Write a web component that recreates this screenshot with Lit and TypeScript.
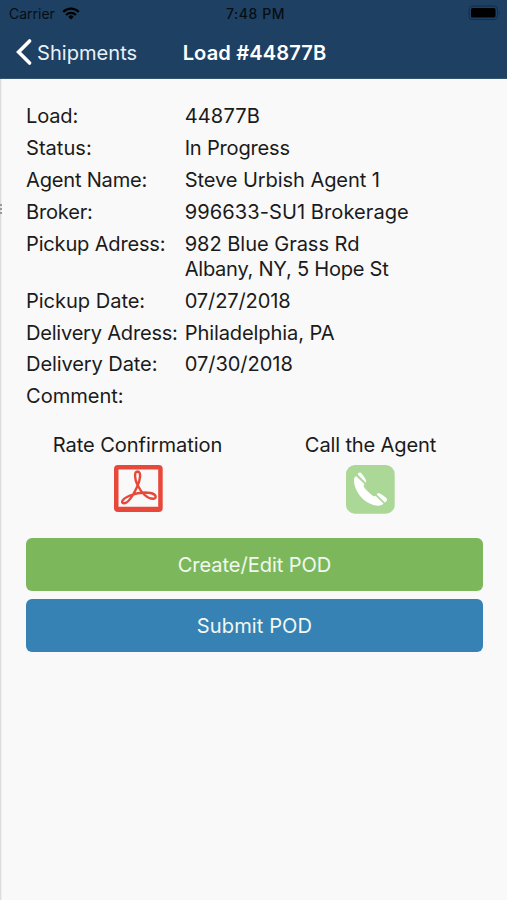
import { LitElement, html, css } from "lit";
import { customElement } from "lit/decorators.js";
import { styleMap } from "lit/directives/style-map.js";

/** A piece of text with its own letter spacing in pixels. */
interface Tracked {
  text: string;
  tracking: number;
}

interface Row {
  label: Tracked;
  lines: Tracked[];
}

const t = (text: string, tracking = 0): Tracked => ({ text, tracking });

const rows: Row[] = [
  { label: t("Load:", -0.2), lines: [t("44877B", 0.1)] },
  { label: t("Status:", 0), lines: [t("In Progress", -0.22)] },
  { label: t("Agent Name:", -0.22), lines: [t("Steve Urbish Agent 1", -0.1)] },
  { label: t("Broker:", -0.2), lines: [t("996633-SU1 Brokerage", 0.05)] },
  {
    label: t("Pickup Adress:", -0.2),
    lines: [t("982 Blue Grass Rd", -0.06), t("Albany, NY, 5 Hope St", -0.27)],
  },
  { label: t("Pickup Date:", -0.05), lines: [t("07/27/2018", -0.14)] },
  { label: t("Delivery Adress:", -0.24), lines: [t("Philadelphia, PA", -0.12)] },
  { label: t("Delivery Date:", -0.12), lines: [t("07/30/2018", -0.06)] },
  { label: t("Comment:", -0.05), lines: [] },
];

const tracked = (item: Tracked) =>
  html`<span style=${styleMap({ letterSpacing: `${item.tracking}px` })}>${item.text}</span>`;

const wifiIcon = html`<svg class="wifi" viewBox="0 0 18 13" width="18" height="13">
  <g fill="none" stroke="#000" stroke-width="2.2">
    <path d="M1.2 4.9 A11 11 0 0 1 16.8 4.9" />
    <path d="M4.1 7.9 A6.9 6.9 0 0 1 13.9 7.9" />
  </g>
  <path d="M9 12.4 L6.3 9.7 A3.8 3.8 0 0 1 11.7 9.7Z" fill="#000" />
</svg>`;

const batteryIcon = html`<svg viewBox="0 0 34 16" width="34" height="16">
  <rect x="1" y="1" width="28.5" height="13.5" rx="3.6" fill="none" stroke="#132d47" stroke-width="1" />
  <rect x="3" y="3" width="24.5" height="9.5" rx="1.6" fill="#000" />
  <path d="M31 5.6 Q32.6 7.7 31 9.8Z" fill="#132d47" />
</svg>`;

const backIcon = html`<svg class="back-icon" viewBox="0 0 18 28" width="18" height="28">
  <path d="M14.6 3 L3.6 14 L14.6 25" fill="none" stroke="#fff" stroke-width="3.6" stroke-linecap="round" />
</svg>`;

const pdfIcon = html`<svg class="pdf" viewBox="0 0 49 49" width="49" height="49">
  <path
    fill="#e8483a"
    fill-rule="evenodd"
    d="M4 0H44.7Q48.7 0 48.7 4V43Q48.7 47 44.7 47H4Q0 47 0 43V4Q0 0 4 0Z M4.5 4.4V41.8H44.2V4.4Z"
  />
  <path
    d="M23.5 20 C20.5 14 20 6.6 23.5 6.5 C27.5 6.6 26.5 15 23 22 C19.5 29.5 14.5 38.3 9.8 38.3 C6.2 38 8.5 33.5 16 30.5 C23 27.8 31 27 36.5 28 C42.5 29 43 33.5 39.5 33.7 C33 34 27 27 23.5 20Z"
    fill="none"
    stroke="#e8483a"
    stroke-width="2.4"
  />
</svg>`;

const phoneIcon = html`<svg viewBox="0 0 49 49" width="49" height="49">
  <rect width="48.7" height="48.7" rx="9" fill="#abd797" />
  <g fill="#fff">
    <path
      d="M10.2 11.3 C8.5 11.6 7.8 13.5 8 16 C8.5 27 19 40 32 40.7 C34.5 40.8 36.5 40 37.5 38.6 L29.5 30.7 C28.7 31.5 27.5 31.5 26.5 30.6 C23 28 19.8 24.8 18 22 C17.3 21 17.8 19.8 18.6 19.2Z"
    />
    <path d="M11.7 9.4 C12 8 13.7 7 15 8 C17 10 19 13 20 15.5 C20.4 17 20 17.7 19.8 17.7Z" />
    <path d="M30.8 29.4 C31 28.5 32.5 28 34 28.7 C37 30 39.5 32 41 34 C41.5 35.3 40 37 38.8 37.4Z" />
  </g>
</svg>`;

@customElement("app-root")
export class AppRoot extends LitElement {
  static styles = css`
    :host {
      display: flex;
      flex-direction: column;
      height: 900px;
      background: #f9f9f9;
      color: #1b1b1b;
      font: 20.1px/24.4px Inter, "Liberation Sans", sans-serif;
      white-space: nowrap;
      overflow: hidden;
    }
    svg {
      display: block;
      flex: none;
    }
    header {
      flex: none;
      box-sizing: border-box;
      height: 79px;
      background: #1e4163;
      border-bottom: 1px solid #34536f;
    }
    .status {
      display: grid;
      grid-template-columns: 1fr auto 1fr;
      height: 28px;
      padding: 0 5px 0 9px;
      font-size: 14px;
      line-height: 28px;
      color: #060d14;
    }
    .carrier {
      display: flex;
      gap: 7px;
    }
    .wifi {
      margin-top: 7px;
    }
    .clock {
      font-weight: 500;
      letter-spacing: 0.55px;
    }
    .battery {
      display: flex;
      justify-content: flex-end;
      padding-top: 5px;
    }
    .nav {
      display: grid;
      grid-template-columns: 1fr auto 1fr;
      height: 50px;
      padding: 0 13px 0 15px;
      line-height: 50px;
      color: #fff;
    }
    .back {
      display: flex;
      gap: 4px;
      color: #e9f1f8;
    }
    .back-icon {
      margin-top: 10px;
    }
    .title {
      font-weight: 600;
      letter-spacing: 0.12px;
    }
    .body {
      display: flex;
      flex: 1;
    }
    .edge {
      display: flex;
      flex-direction: column;
      gap: 2px;
      width: 1px;
      padding-top: 125px;
      background: #dcdcdc;
      border-right: 1px solid #f0f0f0;
    }
    .grip {
      width: 2px;
      height: 2px;
      background: #999;
    }
    main {
      flex: 1;
      padding: 25.4px 24px 0;
    }
    .details {
      display: grid;
      grid-template-columns: 158.7px 1fr;
      row-gap: 7.55px;
      margin: 0;
    }
    .label,
    .value {
      margin: 0;
    }
    .line {
      display: block;
    }
    .actions {
      display: grid;
      grid-template-columns: 223px 243px;
      margin-top: 24.5px;
    }
    .action {
      display: flex;
      flex-direction: column;
      align-items: center;
      gap: 7px;
    }
    .pdf {
      margin-left: 1.6px;
    }
    .buttons {
      display: flex;
      flex-direction: column;
      gap: 7.7px;
      margin-top: 23.8px;
    }
    .button {
      width: 457px;
      height: 53.4px;
      padding: 2px 0 0;
      border: 0;
      border-radius: 6px;
      font: inherit;
      line-height: 51.4px;
      color: #f1f8f0;
    }
    .create {
      background: #7cb85b;
    }
    .submit {
      background: #3682b5;
    }
  `;

  render() {
    return html`
      <header>
        <div class="status">
          <div class="carrier"><span>Carrier</span>${wifiIcon}</div>
          <div class="clock">7:48 PM</div>
          <div class="battery">${batteryIcon}</div>
        </div>
        <nav class="nav">
          <div class="back">${backIcon}<span>Shipments</span></div>
          <div class="title">Load #44877B</div>
        </nav>
      </header>
      <div class="body">
        <div class="edge">
          <div class="grip"></div>
          <div class="grip"></div>
          <div class="grip"></div>
        </div>
        <main>
          <dl class="details">
            ${rows.map(
              (row) => html`
                <dt class="label">${tracked(row.label)}</dt>
                <dd class="value">${row.lines.map((line) => html`<span class="line">${tracked(line)}</span>`)}</dd>
              `
            )}
          </dl>
          <div class="actions">
            <div class="action">${tracked(t("Rate Confirmation", -0.08))}${pdfIcon}</div>
            <div class="action">${tracked(t("Call the Agent", -0.16))}${phoneIcon}</div>
          </div>
          <div class="buttons">
            <button class="button create">${tracked(t("Create/Edit POD", -0.07))}</button>
            <button class="button submit">${tracked(t("Submit POD", 0.08))}</button>
          </div>
        </main>
      </div>
    `;
  }
}
